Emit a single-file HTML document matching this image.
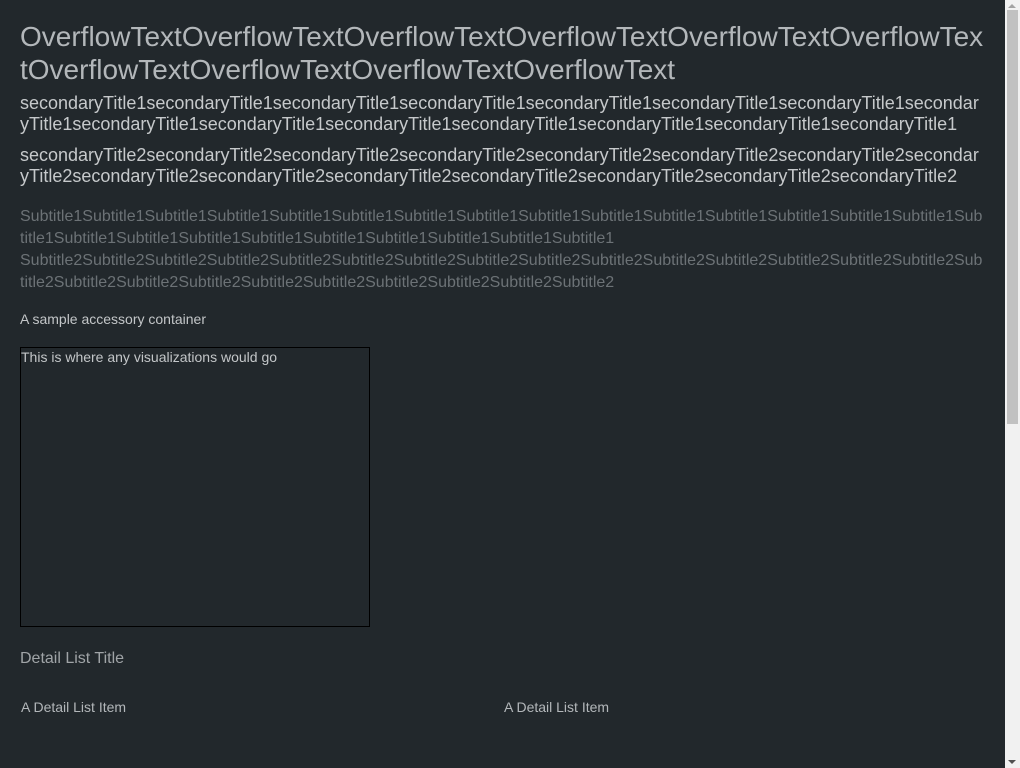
<!DOCTYPE html>
<html><head><style>
html,body{margin:0;padding:0;}
body{background:#22282c;font-family:"Liberation Sans",sans-serif;height:768px;overflow:hidden;}
.wrap{position:relative;height:768px;width:1020px;}
.a{position:absolute;left:20px;width:965px;word-break:break-all;}
.t{top:20px;font-size:28px;line-height:33px;color:#b3b7ba;}
.s{font-size:18px;line-height:21px;color:#c6c9cb;}
.u{font-size:16px;line-height:22px;color:#6c7276;}
.c{top:311px;font-size:14px;color:#c3c6c8;}
.box{position:absolute;left:20px;top:347px;width:348px;height:278px;border:1px solid #000;font-size:14px;color:#c3c6c8;line-height:18px;}
.dt{top:650px;font-size:16px;color:#a0a4a7;}
.di{position:absolute;top:699px;font-size:14px;color:#b3b7ba;}
.sb{position:absolute;left:1005px;top:0;width:15px;height:768px;background:#f1f1f1;}
.th{position:absolute;left:2px;top:10px;width:11px;height:414px;background:#c1c1c1;}
.up{position:absolute;left:3px;top:4px;width:0;height:0;border-left:4px solid transparent;border-right:4px solid transparent;border-bottom:4px solid #a3a3a3;}
.dn{position:absolute;left:3px;bottom:4px;width:0;height:0;border-left:4px solid transparent;border-right:4px solid transparent;border-top:4px solid #505050;}
</style></head><body><div class="wrap">
<div class="a t">OverflowTextOverflowTextOverflowTextOverflowTextOverflowTextOverflowTextOverflowTextOverflowTextOverflowTextOverflowText</div>
<div class="a s" style="top:93px">secondaryTitle1secondaryTitle1secondaryTitle1secondaryTitle1secondaryTitle1secondaryTitle1secondaryTitle1secondaryTitle1secondaryTitle1secondaryTitle1secondaryTitle1secondaryTitle1secondaryTitle1secondaryTitle1secondaryTitle1</div>
<div class="a s" style="top:145px">secondaryTitle2secondaryTitle2secondaryTitle2secondaryTitle2secondaryTitle2secondaryTitle2secondaryTitle2secondaryTitle2secondaryTitle2secondaryTitle2secondaryTitle2secondaryTitle2secondaryTitle2secondaryTitle2secondaryTitle2</div>
<div class="a u" style="top:206px">Subtitle1Subtitle1Subtitle1Subtitle1Subtitle1Subtitle1Subtitle1Subtitle1Subtitle1Subtitle1Subtitle1Subtitle1Subtitle1Subtitle1Subtitle1Subtitle1Subtitle1Subtitle1Subtitle1Subtitle1Subtitle1Subtitle1Subtitle1Subtitle1Subtitle1<br>Subtitle2Subtitle2Subtitle2Subtitle2Subtitle2Subtitle2Subtitle2Subtitle2Subtitle2Subtitle2Subtitle2Subtitle2Subtitle2Subtitle2Subtitle2Subtitle2Subtitle2Subtitle2Subtitle2Subtitle2Subtitle2Subtitle2Subtitle2Subtitle2Subtitle2</div>
<div class="a c">A sample accessory container</div>
<div class="box">This is where any visualizations would go</div>
<div class="a dt">Detail List Title</div>
<div class="di" style="left:21px">A Detail List Item</div>
<div class="di" style="left:504px">A Detail List Item</div>
<div class="sb"><div class="up"></div><div class="th"></div><div class="dn"></div></div>
</div></body></html>
